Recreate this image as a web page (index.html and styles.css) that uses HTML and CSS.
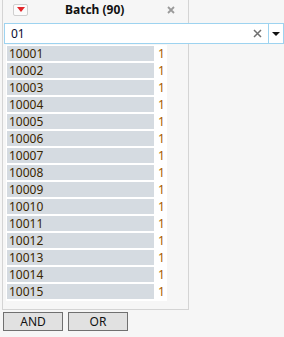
FILE: index.html
```html
<!DOCTYPE html>
<html lang="en">
<head>
  <meta charset="UTF-8" />
  <title>Batch filter</title>
  <link rel="stylesheet" href="styles.css">
</head>
<body>
  <div class="panel">
    <div class="panel-head">
      <span class="menu-btn"><span class="tri-red"></span></span>
      <span class="title">Batch (90)</span>
      <svg class="close" width="8" height="8" viewBox="0 0 8 8"><path d="M1 1 L7 7 M7 1 L1 7" stroke="#9a9a9a" stroke-width="1.8"/></svg>
    </div>
    <div class="search">
      <span class="search-text">01</span>
      <svg class="clear" width="9" height="9" viewBox="0 0 9 9"><path d="M1 1 L8 8 M8 1 L1 8" stroke="#6f6f6f" stroke-width="1.5"/></svg>
      <span class="search-drop"><span class="tri-black"></span></span>
    </div>
    <div class="list" id="list">
      <!-- rows inserted by JS -->
    </div>
  </div>
  <div class="buttons">
    <button class="btn">AND</button>
    <button class="btn">OR</button>
  </div>

  <script>
    // Batch values matching "01"
    const list = document.getElementById('list');
    for (let i = 1; i <= 15; i++) {
      const row = document.createElement('div');
      row.className = 'row';
      row.innerHTML = `<span class="bar">${10000 + i}</span><span class="count">1</span>`;
      list.appendChild(row);
    }
  </script>
</body>
</html>
```

FILE: styles.css
```css
* { margin: 0; padding: 0; box-sizing: border-box; }
body {
  background: #f6f6f6;
  font-family: 'Noto Sans', sans-serif;
  font-size: 12px;
  color: #1e1e1e;
}
.panel {
  margin-left: 2px;
  width: 187px;
  height: 310px;
  border: 1px solid #d4d4d4;
  border-top: none;
  background: #f6f6f6;
}
.panel-head {
  height: 23px;
  display: flex;
  align-items: center;
}
.menu-btn {
  margin-left: 10px;
  margin-top: -4px;
  width: 15px;
  height: 12px;
  border: 1px solid #cfcfcf;
  border-radius: 2px;
  background: #fbfbfb;
  display: flex;
  align-items: center;
  justify-content: center;
}
.tri-red {
  width: 0; height: 0;
  border-left: 4px solid transparent;
  border-right: 4px solid transparent;
  border-top: 5px solid #e3262a;
}
.title {
  font-weight: bold;
  margin-left: 37px;
  margin-top: -4px;
  color: #111;
}
.close { margin-left: auto; margin-right: 13px; margin-top: -4px; }
.search {
  margin-left: 1px;
  width: 280px;
  height: 21px;
  border: 1px solid #9dd3f0;
  background: #fff;
  display: flex;
  align-items: center;
}
.search-text { margin-left: 6px; color: #0c0c30; }
.clear { margin-left: auto; margin-right: 6px; }
.search-drop {
  width: 15px;
  height: 100%;
  border-left: 1px solid #9dd3f0;
  display: flex;
  align-items: center;
  justify-content: center;
}
.tri-black {
  width: 0; height: 0;
  border-left: 4px solid transparent;
  border-right: 4px solid transparent;
  border-top: 4px solid #111;
}
.list {
  margin: 1px 0 0 3px;
  width: 161px;
  background: #fff;
  padding: 1px 0 0 1px;
}
.row {
  display: flex;
  align-items: center;
  height: 17px;
  padding-bottom: 2px;
}
.bar {
  width: 147px;
  height: 15px;
  line-height: 15px;
  background: #d5dbe1;
  padding-left: 2px;
  color: #3a2600;
}
.count {
  margin-left: 4px;
  line-height: 15px;
  color: #a85c00;
}
.buttons {
  display: flex;
  gap: 5px;
  margin: 2px 0 0 3px;
}
.btn {
  width: 60px;
  height: 19px;
  background: #e1e1e1;
  border: 1px solid #707070;
  font-family: 'Noto Sans', sans-serif;
  font-size: 12px;
  color: #111;
}
```
